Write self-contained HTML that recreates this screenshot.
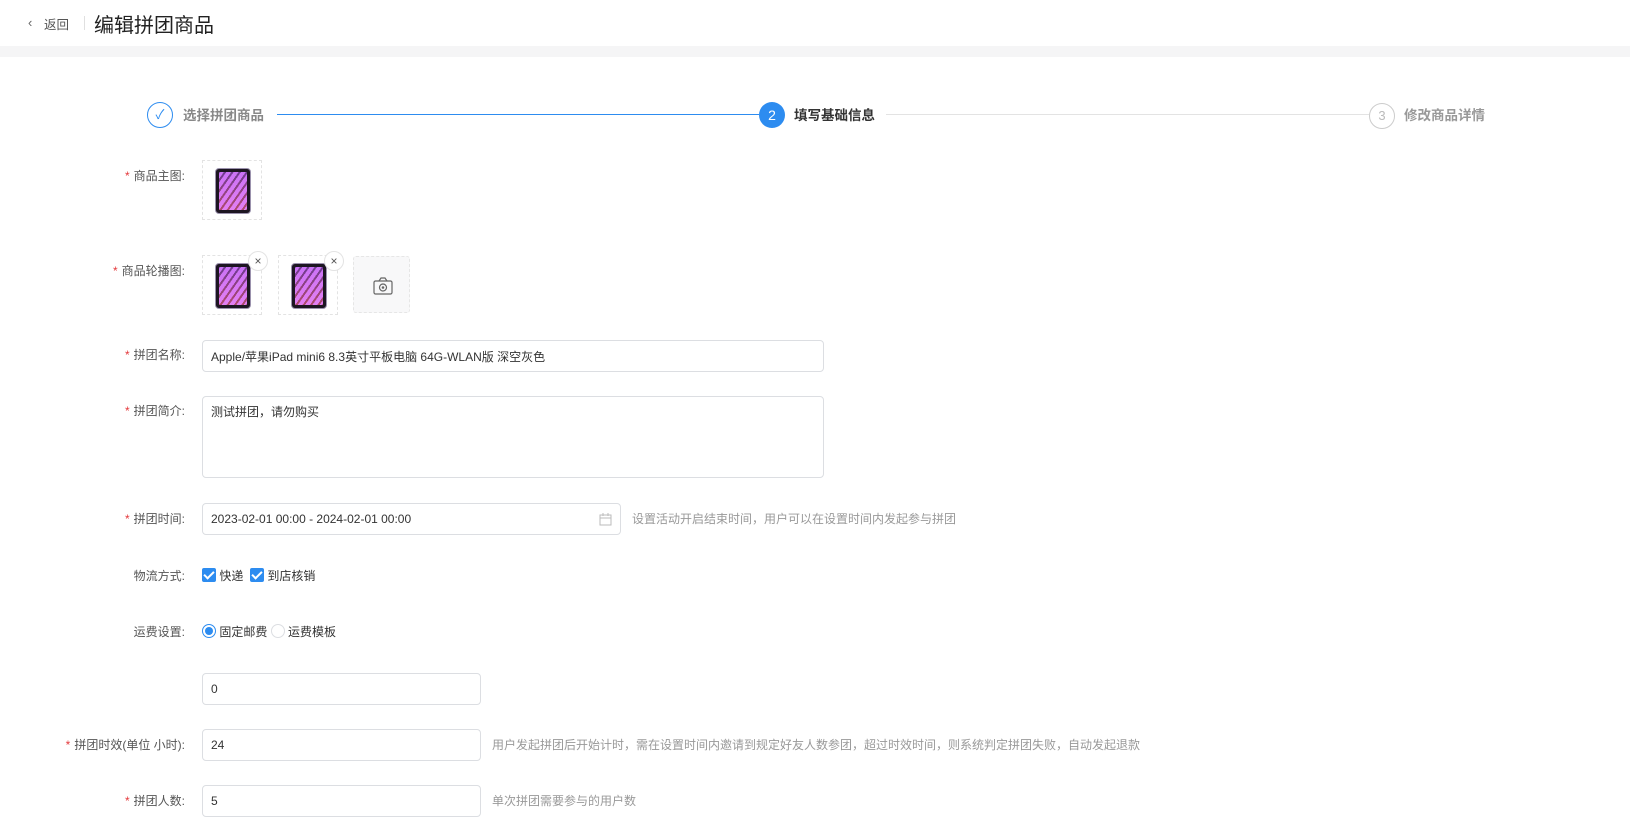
<!DOCTYPE html>
<html><head><meta charset="utf-8"><style>
*{box-sizing:border-box;margin:0;padding:0}
body{width:1630px;height:826px;overflow:hidden;background:#fff;font-family:"Liberation Sans","Noto Sans CJK SC",sans-serif;font-size:12px;color:#333;position:relative}
.a{position:absolute}
.band{left:0;top:46px;width:1630px;height:11px;background:#f5f5f6}
.lbl{position:absolute;right:calc(1630px - 185px);color:#555;white-space:nowrap;text-align:right}
.lbl i{color:#e4393c;font-style:normal;margin-right:4px}
.inp{position:absolute;left:202px;border:1px solid #dcdee2;border-radius:4px;background:#fff;padding-left:8px;display:flex;align-items:center;color:#333}
.hint{position:absolute;color:#999;white-space:nowrap}
.img{position:absolute;border:1px dashed #e3e3e3;width:60px;height:60px}
.ipad{position:absolute;left:12px;top:7px;width:36px;height:46px;border-radius:4px;background:#1d1622;border:1px solid #9b92ad;overflow:hidden}
.ipad:before{content:"";position:absolute;left:3px;top:3px;right:3px;bottom:3px;border-radius:2px;background:repeating-linear-gradient(125deg,#b75cf0 0 4px,#3a1a4a 4px 6px),linear-gradient(#b65cf2,#f05a6a)}
.ipad:after{content:"";position:absolute;left:3px;top:3px;right:3px;bottom:3px;background:linear-gradient(180deg,rgba(170,90,255,.4),rgba(255,90,80,.6));mix-blend-mode:screen}
.x{position:absolute;width:20px;height:20px;border:1px solid #e3e3e3;border-radius:50%;background:#fff;font-size:12px;line-height:18px;text-align:center;color:#555}
.chk{display:inline-block;width:14px;height:14px;background:#2d8cf0;border-radius:2px;position:relative;vertical-align:-2px}
.chk:after{content:"";position:absolute;left:4px;top:1px;width:4px;height:8px;border:solid #fff;border-width:0 2px 2px 0;transform:rotate(45deg)}
.rad{display:inline-block;width:14px;height:14px;border:1px solid #dcdee2;border-radius:50%;vertical-align:-2px;position:relative}
.rad.on{border-color:#2d8cf0}
.rad.on:after{content:"";position:absolute;left:2px;top:2px;width:8px;height:8px;border-radius:50%;background:#2d8cf0}
</style></head><body>
<div class="a" style="left:28px;top:15px;color:#666;font-size:13px">‹</div>
<div class="a" style="left:44px;top:14px;color:#555;font-size:12.5px">返回</div>
<div class="a" style="left:84px;top:16px;width:1px;height:14px;background:#e0e0e0"></div>
<div class="a" style="left:94px;top:9px;font-size:20px;color:#222">编辑拼团商品</div>
<div class="a band"></div>

<div class="a" style="left:147px;top:102px;width:26px;height:26px;border:1px solid #2d8cf0;border-radius:50%;color:#2d8cf0;text-align:center;line-height:24px;font-size:13px">✓</div>
<div class="a" style="left:183px;top:104px;font-weight:bold;color:#888;font-size:13.5px">选择拼团商品</div>
<div class="a" style="left:277px;top:114px;width:482px;height:1px;background:#2d8cf0"></div>
<div class="a" style="left:759px;top:102px;width:26px;height:26px;background:#2d8cf0;border-radius:50%;color:#fff;text-align:center;line-height:26px;font-size:14px">2</div>
<div class="a" style="left:794px;top:104px;font-weight:bold;color:#333;font-size:13.5px">填写基础信息</div>
<div class="a" style="left:886px;top:114px;width:483px;height:1px;background:#e3e3e3"></div>
<div class="a" style="left:1369px;top:103px;width:26px;height:26px;border:1px solid #ccc;border-radius:50%;color:#bbb;text-align:center;line-height:24px;font-size:13px">3</div>
<div class="a" style="left:1404px;top:104px;font-weight:bold;color:#999;font-size:13.5px">修改商品详情</div>

<div class="lbl" style="top:167px"><i>*</i>商品主图:</div>
<div class="img" style="left:202px;top:160px"><div class="ipad"></div></div>

<div class="lbl" style="top:262px"><i>*</i>商品轮播图:</div>
<div class="img" style="left:202px;top:255px"><div class="ipad"></div></div>
<div class="x" style="left:248px;top:251px">×</div>
<div class="img" style="left:278px;top:255px"><div class="ipad"></div></div>
<div class="x" style="left:324px;top:251px">×</div>
<div class="a" style="left:353px;top:256px;width:57px;height:57px;border:1px dashed #e6e6e6;border-radius:3px;background:#f8f8f9">
<svg width="57" height="57" viewBox="0 0 57 57"><rect x="20" y="24" width="18" height="13" rx="1.5" fill="none" stroke="#666" stroke-width="1.2"/><path d="M25 24l2-3h4l2 3" fill="none" stroke="#666" stroke-width="1.2"/><circle cx="29" cy="30.5" r="3.5" fill="none" stroke="#666" stroke-width="1.2"/><circle cx="29" cy="30.5" r="1.3" fill="#666"/></svg></div>

<div class="lbl" style="top:346px"><i>*</i>拼团名称:</div>
<div class="inp" style="top:340px;width:622px;height:32px">Apple/苹果iPad mini6 8.3英寸平板电脑 64G-WLAN版 深空灰色</div>

<div class="lbl" style="top:402px"><i>*</i>拼团简介:</div>
<div class="inp" style="top:396px;width:622px;height:82px;align-items:flex-start;padding-top:6px">测试拼团，请勿购买</div>

<div class="lbl" style="top:510px"><i>*</i>拼团时间:</div>
<div class="inp" style="top:503px;width:419px;height:32px">2023-02-01 00:00 - 2024-02-01 00:00
<svg class="a" style="right:8px;top:9px" width="13" height="13" viewBox="0 0 13 13"><rect x="1" y="2" width="11" height="10" fill="none" stroke="#bbb"/><path d="M1 5h11M4 0v3M9 0v3" stroke="#bbb"/></svg></div>
<div class="hint" style="left:632px;top:510px">设置活动开启结束时间，用户可以在设置时间内发起参与拼团</div>

<div class="lbl" style="top:567px">物流方式:</div>
<div class="a" style="left:202px;top:567px;color:#333"><span class="chk"></span> 快递 &nbsp;<span class="chk"></span> 到店核销</div>

<div class="lbl" style="top:623px">运费设置:</div>
<div class="a" style="left:202px;top:623px;color:#333"><span class="rad on"></span> 固定邮费 <span class="rad"></span> 运费模板</div>

<div class="inp" style="top:673px;width:279px;height:32px">0</div>

<div class="lbl" style="top:736px"><i>*</i>拼团时效(单位 小时):</div>
<div class="inp" style="top:729px;width:279px;height:32px">24</div>
<div class="hint" style="left:492px;top:736px">用户发起拼团后开始计时，需在设置时间内邀请到规定好友人数参团，超过时效时间，则系统判定拼团失败，自动发起退款</div>

<div class="lbl" style="top:792px"><i>*</i>拼团人数:</div>
<div class="inp" style="top:785px;width:279px;height:32px">5</div>
<div class="hint" style="left:492px;top:792px">单次拼团需要参与的用户数</div>
</body></html>
